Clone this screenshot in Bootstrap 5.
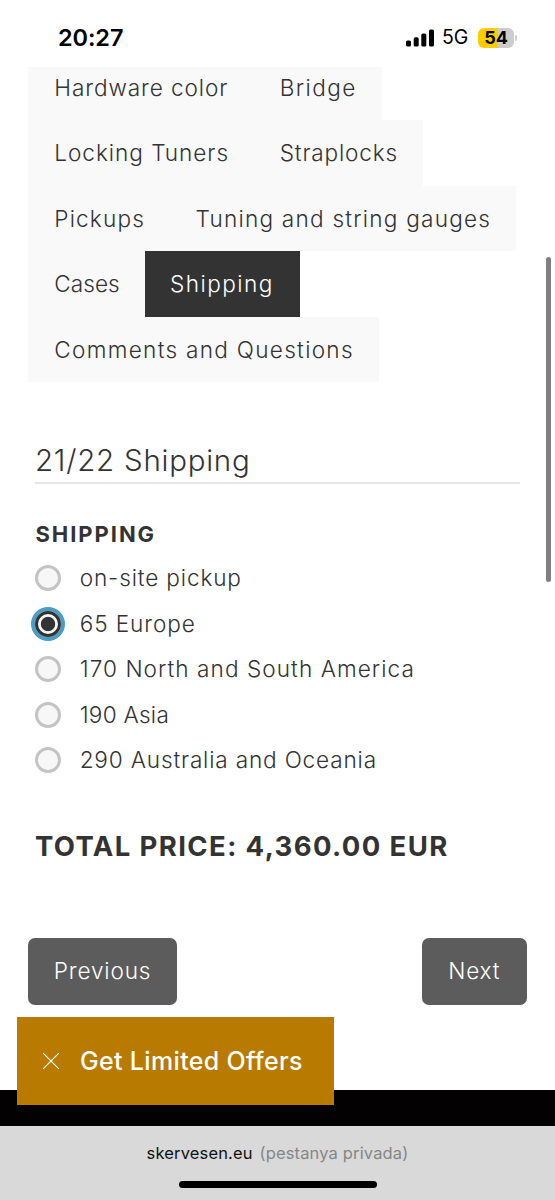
<!DOCTYPE html>
<html lang="en">
<head>
<meta charset="utf-8">
<meta name="viewport" content="width=device-width, initial-scale=1">
<title>Skervesen – Shipping</title>
<link href="https://cdn.jsdelivr.net/npm/bootstrap@5.3.0/dist/css/bootstrap.min.css" rel="stylesheet">
<style>
body{font-family:Inter,"Open Sans",sans-serif;color:#333;font-size:22.6px;font-weight:300;line-height:1.2;background:#fff}
.phone{height:1200px}
.status{height:67px;padding:9px 38px 0 58px;color:#000}
.clock{font-size:23.5px;font-weight:600;letter-spacing:-.1px}
.net{font-size:19.5px;font-weight:400;letter-spacing:-.2px;margin-left:8px;margin-right:10px}
.batt{width:36px;height:20px;border-radius:6px;background:linear-gradient(90deg,#fc0 55%,#ccc 55%);font-size:18px;font-weight:700;line-height:20px;letter-spacing:0;text-align:center;margin-top:-1px}
.batt-tip{width:2px;height:6px;border-radius:0 3px 3px 0;background:#ccc;margin-left:1px}
.steps{height:315px;margin-left:28.3px}
.step-row{height:65.4px;flex:none}
.step-row a{background:#f9f9f9;color:#333;padding:0 0 0 26px;line-height:65px;white-space:nowrap;letter-spacing:var(--ls);width:var(--w);height:65.6px}
.step-row a.active{background:#333;color:#fff;padding-left:25px}
.section-head{margin:60px 35px 0 35px;height:42px;border-bottom:2px solid #e5e5e5;font-size:29.5px;font-weight:300;line-height:37px;letter-spacing:.75px}
.group-title{margin:38px 0 0 35.5px;font-size:22px;line-height:24px;font-weight:700;letter-spacing:1.95px}
.options{margin:10px 0 0 35.4px}
.opt{height:45.5px;gap:18.3px;letter-spacing:var(--ls)}
.opt span{margin-top:-1px}
.opt .form-check-input{width:26px;height:26px;margin:0;border:3px solid #c4c4c4;background:#f7f7f7;box-shadow:none}
.opt .form-check-input:checked{border-color:#333;background:radial-gradient(circle,#333 0 6.7px,#f7f7f7 7.6px);box-shadow:0 0 0 4px #4b9dc3}
.total{margin:48px 0 0 35px;font-size:27.5px;line-height:30px;font-weight:700;letter-spacing:1.38px;white-space:nowrap}
.pager{margin:77px 28.5px 0 28.3px}
.pager .btn{height:67px;background:#5c5c5c;color:#fff;border:0;border-radius:7px;font-size:22.6px;font-weight:300;padding:0 0 2px;letter-spacing:.85px}
.prev{width:148.5px}.next{width:104.5px}
.foot{margin-top:85px;height:36px;background:#040103}
.offer{left:17px;top:1017px;width:317.3px;height:88px;background:#b97a00;color:#fff;font-size:25px;font-weight:500;letter-spacing:.33px;padding-left:25.5px;gap:21.5px}
.urlbar{height:74px;background:#d9d9d9;font-size:16.5px;font-weight:400;padding-top:18px;color:#111;letter-spacing:.15px}
.urlbar .muted{color:#868688;margin-left:2px}
.home{width:198px;height:7px;border-radius:4px;background:#000;margin-top:17px}
.scroller{left:546.3px;top:257px;width:4.5px;height:325px;border-radius:3px;background:#7f7f7f}
</style>
</head>
<body>
<div class="phone position-relative overflow-hidden d-flex flex-column">
  <header class="status d-flex align-items-center flex-shrink-0">
    <span class="clock me-auto">20:27</span>
    <svg width="28" height="18" viewBox="0 0 28 18"><rect x="0" y="11.5" width="5" height="6" rx="1.6"/><rect x="7.7" y="8.3" width="5" height="9.2" rx="1.6"/><rect x="15.3" y="4.4" width="5" height="13.1" rx="1.6"/><rect x="23" y="0.5" width="5" height="17" rx="1.6"/></svg>
    <span class="net">5G</span>
    <span class="batt">54</span><span class="batt-tip"></span>
  </header>

  <nav class="steps nav flex-column flex-nowrap justify-content-end overflow-hidden flex-shrink-0">
    <div class="step-row d-flex"><a class="nav-link" style="--w:225.5px;--ls:.9px">Hardware color</a><a class="nav-link" style="--w:128.5px;--ls:1.4px">Bridge</a></div>
    <div class="step-row d-flex"><a class="nav-link" style="--w:225.5px;--ls:.95px">Locking Tuners</a><a class="nav-link" style="--w:169px;--ls:.8px">Straplocks</a></div>
    <div class="step-row d-flex"><a class="nav-link" style="--w:141.2px;--ls:1.15px">Pickups</a><a class="nav-link" style="--w:346.3px;--ls:1.22px">Tuning and string gauges</a></div>
    <div class="step-row d-flex"><a class="nav-link" style="--w:116.7px;--ls:.05px">Cases</a><a class="nav-link active" style="--w:154.7px;--ls:1.45px">Shipping</a></div>
    <div class="step-row d-flex"><a class="nav-link" style="--w:350.5px;--ls:1.28px">Comments and Questions</a></div>
  </nav>

  <h2 class="section-head">21/22 Shipping</h2>
  <h3 class="group-title">SHIPPING</h3>
  <div class="options">
    <label class="opt d-flex align-items-center" style="--ls:.85px"><input class="form-check-input" type="radio" name="ship"><span>on-site pickup</span></label>
    <label class="opt d-flex align-items-center" style="--ls:.9px"><input class="form-check-input" type="radio" name="ship" checked><span>65 Europe</span></label>
    <label class="opt d-flex align-items-center" style="--ls:1.05px"><input class="form-check-input" type="radio" name="ship"><span>170 North and South America</span></label>
    <label class="opt d-flex align-items-center" style="--ls:.25px"><input class="form-check-input" type="radio" name="ship"><span>190 Asia</span></label>
    <label class="opt d-flex align-items-center" style="--ls:.82px"><input class="form-check-input" type="radio" name="ship"><span>290 Australia and Oceania</span></label>
  </div>
  <div class="total">TOTAL PRICE: 4,360.00 EUR</div>

  <div class="pager d-flex justify-content-between">
    <button class="btn prev">Previous</button>
    <button class="btn next">Next</button>
  </div>

  <div class="foot flex-shrink-0"></div>
  <footer class="urlbar d-flex flex-column align-items-center flex-shrink-0">
    <div class="text-nowrap">skervesen.eu <span class="muted">(pestanya privada)</span></div>
    <div class="home"></div>
  </footer>

  <div class="offer position-absolute d-flex align-items-center">
    <svg width="16" height="16" viewBox="0 0 16 16" stroke="#fff" stroke-width="1.1"><path d="M0 0 16 16M16 0 0 16"/></svg>
    <span>Get Limited Offers</span>
  </div>
  <div class="scroller position-absolute"></div>
</div>
<script src="https://cdn.jsdelivr.net/npm/bootstrap@5.3.0/dist/js/bootstrap.bundle.min.js"></script>
</body>
</html>
